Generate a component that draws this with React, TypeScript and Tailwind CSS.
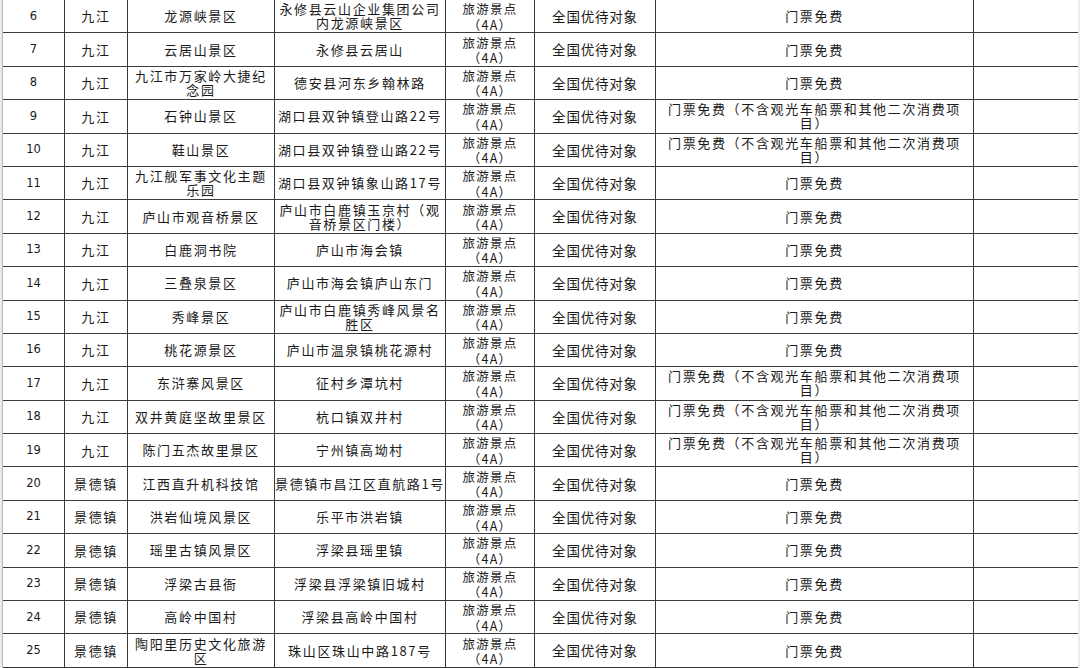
import React from "react";

const LONG = "门票免费（不含观光车船票和其他二次消费项\n目）";

type Row = [number, string, string, string, string | null];

const rows: Row[] = [
  [6, "九江", "龙源峡景区", "永修县云山企业集团公司\n内龙源峡景区", null],
  [7, "九江", "云居山景区", "永修县云居山", null],
  [8, "九江", "九江市万家岭大捷纪\n念园", "德安县河东乡翰林路", null],
  [9, "九江", "石钟山景区", "湖口县双钟镇登山路22号", LONG],
  [10, "九江", "鞋山景区", "湖口县双钟镇登山路22号", LONG],
  [11, "九江", "九江舰军事文化主题\n乐园", "湖口县双钟镇象山路17号", null],
  [12, "九江", "庐山市观音桥景区", "庐山市白鹿镇玉京村（观\n音桥景区门楼）", null],
  [13, "九江", "白鹿洞书院", "庐山市海会镇", null],
  [14, "九江", "三叠泉景区", "庐山市海会镇庐山东门", null],
  [15, "九江", "秀峰景区", "庐山市白鹿镇秀峰风景名\n胜区", null],
  [16, "九江", "桃花源景区", "庐山市温泉镇桃花源村", null],
  [17, "九江", "东浒寨风景区", "征村乡潭坑村", LONG],
  [18, "九江", "双井黄庭坚故里景区", "杭口镇双井村", LONG],
  [19, "九江", "陈门五杰故里景区", "宁州镇高坳村", LONG],
  [20, "景德镇", "江西直升机科技馆", "景德镇市昌江区直航路1号", null],
  [21, "景德镇", "洪岩仙境风景区", "乐平市洪岩镇", null],
  [22, "景德镇", "瑶里古镇风景区", "浮梁县瑶里镇", null],
  [23, "景德镇", "浮梁古县衙", "浮梁县浮梁镇旧城村", null],
  [24, "景德镇", "高岭中国村", "浮梁县高岭中国村", null],
  [25, "景德镇", "陶阳里历史文化旅游\n区", "珠山区珠山中路187号", null],
];

const cell =
  "flex flex-col items-center justify-center text-center border-r border-b border-[#3a3a3a] overflow-hidden";

function Text({ t }: { t: string }) {
  return <span className="block whitespace-pre leading-[14px]">{t}</span>;
}

export default function App() {
  return (
    <div className="w-[1080px] h-[668px] overflow-hidden bg-white flex">
      <div className="w-[2px] h-full bg-[#ececec]" />
      <div
        className="w-[1076px] grid grid-cols-[62px_63px_147px_171px_89px_121px_318px_105px] auto-rows-[33.4px] border-l border-[#b8b8b8] text-[13px] tracking-[1.65px] text-[#1a1a1a]"
        style={{ fontFamily: '"Noto Sans CJK SC", "Noto Sans", sans-serif' }}
      >
        {rows.map(([n, city, name, addr, note]) => (
          <React.Fragment key={n}>
            <div
              className={cell + " text-[11.5px] tracking-normal"}
              style={{ fontFamily: '"DejaVu Sans", "Liberation Sans", sans-serif' }}
            >
              {n}
            </div>
            <div className={cell}>{city}</div>
            <div className={cell}>
              <Text t={name} />
            </div>
            <div className={cell}>
              <Text t={addr} />
            </div>
            <div className={cell + " text-[12.5px] tracking-[1.2px]"}>
              <span className="block whitespace-pre leading-[15.5px] pt-[1px]">{"旅游景点\n（4A）"}</span>
            </div>
            <div className={cell + " tracking-[0.8px] text-[13.5px]"}>全国优待对象</div>
            <div className={cell}>
              <Text t={note ?? "门票免费"} />
            </div>
            <div className={cell + " border-r-[#555]"} />
          </React.Fragment>
        ))}
      </div>
      <div className="w-[2px] h-full bg-[#ececec]" />
    </div>
  );
}
